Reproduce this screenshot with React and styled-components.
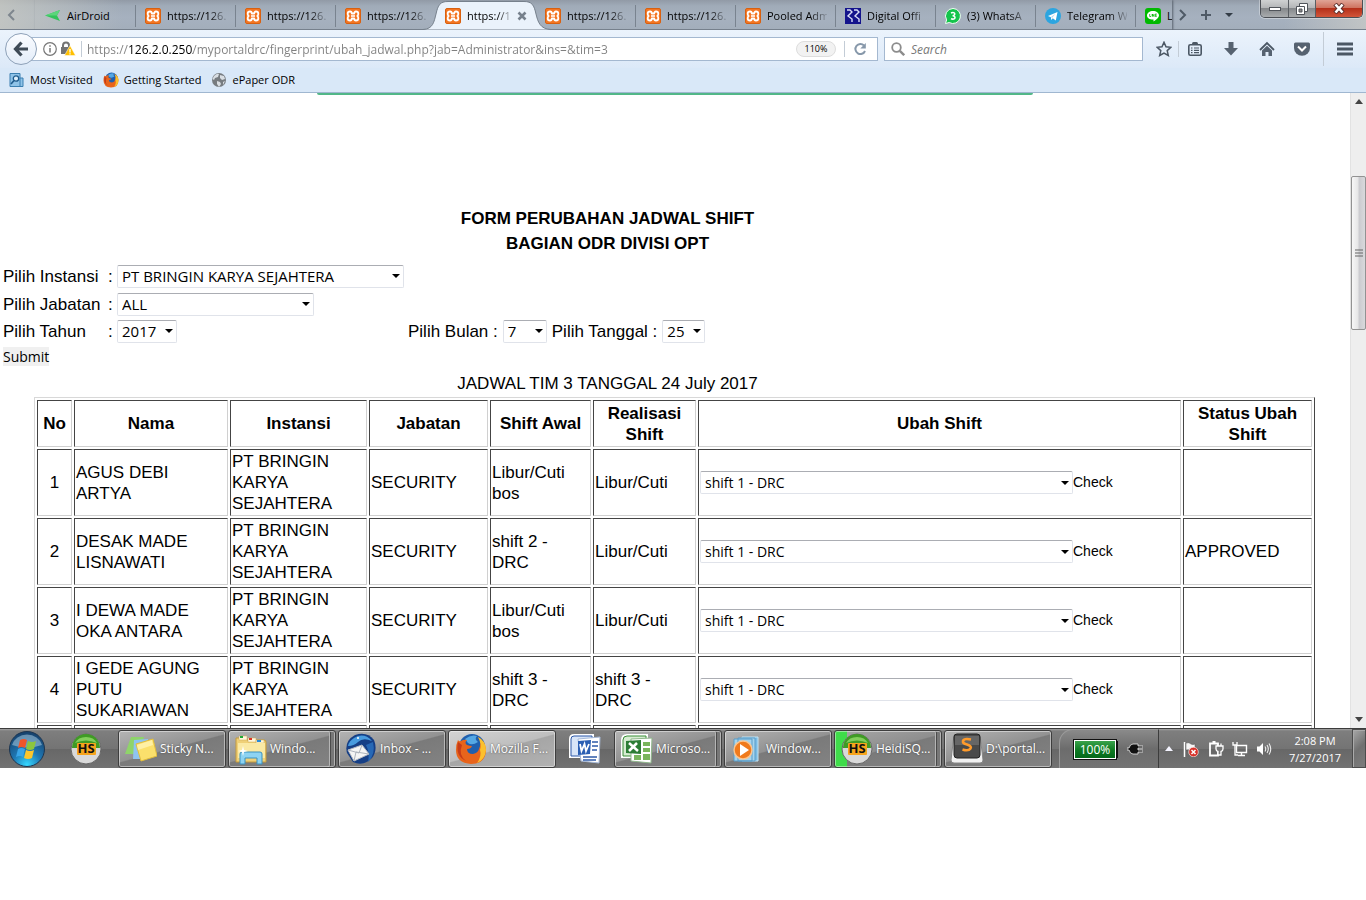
import React from "react";
import styled, { createGlobalStyle, css } from "styled-components";

const UI = `"Open Sans", "Noto Sans", sans-serif`;
const PAGE = `"Liberation Sans", Arial, sans-serif`;

const Global = createGlobalStyle`
  *, *::before, *::after { box-sizing: border-box; }
  body { margin: 0; background: #fff; font-family: ${UI}; font-size: 11px; color: #000; }
  button, input, select { font: inherit; color: inherit; margin: 0; }
  button { border: 0; padding: 0; background: none; cursor: pointer; }
  svg { display: block; flex: none; }
`;

const Desktop = styled.div`
  display: flex;
  flex-direction: column;
  overflow: hidden;
`;

/* ---------- tab strip ---------- */
const TabStrip = styled.header`
  display: flex;
  height: 30px;
  background:
    linear-gradient(90deg, rgba(205, 205, 196, 0.7), rgba(190, 195, 195, 0) 9%, rgba(190, 195, 195, 0) 94%, rgba(205, 205, 200, 0.7)),
    linear-gradient(#919aa6 0, #a0abb8 20%, #a6b1bf 60%, #a3aebb 100%);
  border-bottom: 1px solid #76808c;
`;
const StripButton = styled.button`
  width: ${(p) => p.$w}px;
  height: 30px;
  display: grid;
  place-items: center;
  flex: none;
`;
const Tabs = styled.nav`
  display: flex;
  flex: 0 1 1137px;
  min-width: 0;
  height: 30px;
  overflow: hidden;
  box-shadow: 1px 0 2px #59626d;
`;
const Tab = styled.button`
  position: relative;
  flex: none;
  width: 100px;
  height: 30px;
  padding: 2px 8px 0 10px;
  display: flex;
  align-items: center;
  gap: 6px;
  text-align: left;
  &::after {
    content: "";
    display: ${(p) => (p.$line ? "block" : "none")};
    position: absolute;
    right: -1px;
    top: 5px;
    width: 1px;
    height: 22px;
    background: #79838f;
  }
  z-index: ${(p) => (p.$active ? 2 : 1)};
`;
const TabShape = styled.svg`
  position: absolute;
  left: -12px;
  top: 0;
  z-index: -1;
`;
const TabText = styled.span`
  flex: 1;
  min-width: 0;
  overflow: hidden;
  white-space: nowrap;
  font-size: 11px;
  line-height: 16px;
  ${(p) =>
    p.$fade &&
    css`
      mask-image: linear-gradient(90deg, #000 70%, transparent 105%);
    `}
`;
const Spacer = styled.div`
  flex: 1;
`;
const WindowButtons = styled.div`
  display: flex;
  flex: none;
  height: 18px;
  margin-right: 3px;
  border: 1px solid #4b4f55;
  border-top: 0;
  border-radius: 0 0 5px 5px;
  overflow: hidden;
  box-shadow: 0 0 0 1px rgba(255, 255, 255, 0.35);
`;
const WindowButton = styled.button`
  width: ${(p) => p.$w}px;
  display: grid;
  place-items: center;
  border-right: 1px solid #5a5e63;
  background: ${(p) =>
    p.$close
      ? "linear-gradient(#e0a496 0, #cf7461 45%, #b5301a 50%, #d2563a 100%)"
      : "linear-gradient(#cfd1d2 0, #b4b6b8 45%, #85888b 50%, #a9acae 100%)"};
  &:last-child { border-right: 0; }
`;

/* ---------- navigation bar ---------- */
const NavBar = styled.div`
  display: flex;
  align-items: center;
  height: 38px;
  padding-left: 5px;
  background: linear-gradient(#ebf3fc, #dce9f8);
`;
const BackButton = styled.button`
  width: 32px;
  height: 32px;
  flex: none;
  display: grid;
  place-items: center;
  border: 1px solid #8ea1b8;
  border-radius: 50%;
  background: linear-gradient(#fafcff, #e3edf9);
  z-index: 1;
`;
const UrlBar = styled.div`
  display: flex;
  align-items: center;
  flex: 1 1 857px;
  min-width: 0;
  height: 24px;
  margin: 0 6px 0 -16px;
  padding: 0 10px 0 21px;
  border: 1px solid #a4b8d0;
  background: #fff;
`;
const UrlInput = styled.input`
  flex: 1;
  min-width: 0;
  height: 22px;
  padding: 0;
  border: 0;
  outline: 0;
  font-size: 12px;
  color: transparent;
  background: linear-gradient(90deg, #808080 0 41px, #000 41px 106px, #808080 106px) text;
`;
const Divider = styled.i`
  width: 1px;
  height: ${(p) => p.$h}px;
  margin: 0 ${(p) => p.$m}px;
  background: #c3ccd6;
  flex: none;
`;
const ZoomPill = styled.button`
  width: 40px;
  height: 16px;
  border: 1px solid #ddd;
  border-radius: 8px;
  background: #f2f2f2;
  font-size: 9px;
  line-height: 14px;
`;
const SearchBar = styled.label`
  display: flex;
  align-items: center;
  gap: 6px;
  flex: 0 1 259px;
  height: 24px;
  padding: 0 6px;
  border: 1px solid #a4b8d0;
  background: #fff;
`;
const SearchInput = styled.input`
  width: 100%;
  min-width: 0;
  border: 0;
  padding: 0;
  outline: 0;
  font-size: 12px;
  &::placeholder { color: #777; font-style: italic; opacity: 1; }
`;
const Tools = styled.div`
  display: flex;
  align-items: center;
  margin-left: 9px;
`;
const Tool = styled.button`
  width: ${(p) => p.$w || 36}px;
  height: 30px;
  display: grid;
  place-items: center;
`;

/* ---------- bookmarks ---------- */
const Bookmarks = styled.nav`
  display: flex;
  align-items: center;
  gap: 10px;
  height: 25px;
  padding: 0 9px;
  background: #d9e8f8;
  border-bottom: 1px solid #a0b7d0;
`;
const Bookmark = styled.a`
  display: flex;
  align-items: center;
  gap: 5px;
  color: #000;
  text-decoration: none;
  font-size: 11px;
  line-height: 16px;
  white-space: nowrap;
`;

/* ---------- page ---------- */
const Viewport = styled.div`
  display: flex;
  height: 635px;
`;
const Page = styled.main`
  flex: 1;
  min-width: 0;
  overflow: hidden;
  font-family: ${PAGE};
  font-size: 17px;
  line-height: 21px;
`;
const Banner = styled.div`
  width: 53%;
  height: 2px;
  margin: 0 auto;
  background: #52b788;
  border-radius: 0 0 4px 4px;
`;
const Form = styled.form`
  width: 90%;
  padding: 111px 3px 0;
`;
const Heading = styled.h1`
  margin: 0;
  font-size: 17px;
  line-height: 25px;
  text-align: center;
`;
const Fields = styled.div`
  display: grid;
  grid-template-columns: 102px 6px 288px auto;
  column-gap: 3px;
  grid-template-rows: 28px 28px 26px;
  align-items: center;
  margin-top: 6px;
`;
const Label = styled.label`
  white-space: nowrap;
`;
const DateFields = styled.div`
  display: flex;
  align-items: center;
  gap: 5px;
`;
const SelectWrap = styled.span`
  display: inline-grid;
  align-items: center;
  width: ${(p) => p.$w}px;
  svg { grid-area: 1 / 1; justify-self: end; margin-right: 4px; pointer-events: none; }
`;
const SelectBox = styled.select`
  grid-area: 1 / 1;
  width: 100%;
  height: 23px;
  padding: 0 4px;
  appearance: none;
  border: 1px solid #e0e3ea;
  border-top-color: #abadb3;
  border-radius: 2px;
  background: #fff;
  font-family: ${UI};
  font-size: ${(p) => p.$size || 15}px;
`;
const Submit = styled.button`
  display: block;
  height: 19px;
  margin-top: 3px;
  background: #f0f0f0;
  font-family: ${UI};
  font-size: 14px;
  line-height: 19px;
`;
const Subtitle = styled.p`
  margin: 7px 0 2px;
  line-height: 22px;
  text-align: center;
`;
const TableArea = styled.div`
  padding: 0 35px 0 34px;
`;
const Schedule = styled.table`
  width: 100%;
  table-layout: fixed;
  border: 1px solid #d8d8d8;
  border-right-color: #444;
  border-bottom-color: #444;
  border-spacing: 2px;
`;
const cell = css`
  padding: 1px;
  border: 1px solid #d0d0d0;
  border-top-color: #444;
  border-left-color: #444;
  white-space: pre-line;
`;
const Th = styled.th`
  ${cell}
  height: 47px;
`;
const Td = styled.td`
  ${cell}
  height: 67px;
  text-align: ${(p) => (p.$center ? "center" : "left")};
`;
const ShiftField = styled.div`
  display: flex;
  align-items: center;
`;
const CheckButton = styled.button`
  font-size: 14px;
`;
const Scrollbar = styled.div`
  display: flex;
  flex-direction: column;
  align-items: center;
  width: 16px;
  flex: none;
  padding: 6px 0;
  background: #eeeeee;
  border-left: 1px solid #e2e2e2;
`;
const Thumb = styled.div`
  display: grid;
  place-items: center;
  width: 15px;
  height: 154px;
  margin: 72px 0 auto;
  border: 1px solid #929292;
  border-radius: 2px;
  background: linear-gradient(90deg, #f7f7f7, #e6e6e7 45%, #cbcbcf 55%, #d9d9dc);
`;

/* ---------- taskbar ---------- */
const Taskbar = styled.footer`
  display: flex;
  align-items: center;
  gap: 2px;
  height: 40px;
  border-top: 1px solid #3c3c3c;
  background: linear-gradient(#a2a2a2 0, #7e7e7e 2px, #747474 50%, #676767 51%, #727272 100%);
  color: #fff;
  font-size: 11px;
`;
const Launcher = styled.button`
  display: grid;
  place-items: center;
  flex: none;
  width: ${(p) => p.$w}px;
  height: 38px;
`;
const Task = styled.button`
  display: flex;
  align-items: center;
  gap: 3px;
  flex: 0 1 108px;
  min-width: 0;
  height: 38px;
  padding: 0 4px 0 6px;
  border: 1px solid #3e3e3e;
  border-radius: 3px;
  box-shadow: inset 0 0 0 1px rgba(255, 255, 255, 0.45)${(p) => (p.$stack ? ", inset -4px 0 0 0 #777, inset -5px 0 0 0 #4a4a4a, inset -6px 0 0 0 #b5b5b5" : "")};
  color: #fff;
  font-size: 12px;
  text-align: left;
  background: ${(p) =>
    p.$active
      ? "linear-gradient(165deg, #d4d4d4 0, #bebebe 48%, #a6a6a6 50%, #b2b2b2 100%)"
      : p.$progress
      ? "linear-gradient(90deg, #3fdc4a 0 12px, transparent 12px), linear-gradient(165deg, #a8a8a8 0, #8e8e8e 48%, #7a7a7a 50%, #828282 100%)"
      : "linear-gradient(165deg, #b4b4b4 0, #929292 48%, #7a7a7a 50%, #838383 100%)"};
  span { white-space: nowrap; text-shadow: 0 0 2px #444; }
`;
const TrayPanel = styled.div`
  display: flex;
  align-items: center;
  gap: 11px;
  flex: none;
  width: 100px;
  height: 39px;
  margin-left: 5px;
  padding-left: 14px;
  border: 1px solid #9a9a9a;
  border-right-color: #3c3c3c;
  border-bottom: 0;
  border-radius: 14px 0 0 0;
  background: linear-gradient(#8a8a8a, #6c6c6c 50%, #747474);
`;
const Battery = styled.div`
  width: 42px;
  height: 19px;
  border: 1px solid #fff;
  outline: 1px solid #111;
  background: linear-gradient(#3aa34b, #0d7a22 55%, #05691a);
  font-size: 12px;
  line-height: 17px;
  text-align: center;
  box-shadow: 3px 0 0 -1px #111;
`;
const TrayIcons = styled.div`
  display: flex;
  align-items: center;
  gap: 8px;
  margin-left: 3px;
  flex: none;
`;
const Clock = styled.div`
  flex: 1 0 68px;
  margin-left: 6px;
  line-height: 17px;
  text-align: center;
`;
const ShowDesktop = styled.button`
  width: 14px;
  height: 39px;
  flex: none;
  border: 1px solid #4c4c4c;
  box-shadow: inset 1px 1px 0 #aaa;
  background: linear-gradient(135deg, #a8a8a8, #707070 50%, #7d7d7d);
`;

/* ---------- icons ---------- */
const Svg = ({ w = 16, h = w, vb, children, ...rest }) => (
  <svg width={w} height={h} viewBox={vb || `0 0 ${w} ${h}`} fill="none" aria-hidden="true" {...rest}>
    {children}
  </svg>
);
const Xampp = () => (
  <Svg>
    <rect x=".5" y=".5" width="15" height="15" rx="1.5" fill="#f37623" stroke="#d9600f" />
    <path
      d="M5 3.500q1.800 0 1.800 2h2.400q0-2 1.800-2 2.300 0 2.300 2.300 0 1.500-1 2.200 1 .7 1 2.200 0 2.300-2.300 2.300-1.800 0-1.800-2H6.800q0 2-1.800 2-2.300 0-2.300-2.300 0-1.500 1-2.200-1-.7-1-2.200Q2.700 3.500 5 3.500Z"
      fill="#f37623"
      stroke="#fff"
      strokeWidth="1.800"
      strokeLinejoin="round"
    />
    <path d="M6 8h4" stroke="#fff" strokeWidth="1.600" />
  </Svg>
);
const AirDroid = () => (
  <Svg>
    <path d="M0 7.5 15 2l-3 5.5L15 13Z" fill="#32c35a" />
    <path d="M0 7.5 15 2l-3 5.5Z" fill="#5bd57b" />
  </Svg>
);
const Digital = () => (
  <Svg>
    <rect width="16" height="16" fill="#14148c" />
    <path d="M2 2h3l2 2-4 4 4 3v3M9 2h3l2 2-4 4 4 3v3" stroke="#d8dcf5" strokeWidth="1.4" />
  </Svg>
);
const WhatsApp = () => (
  <Svg>
    <path d="M8 .5a7.5 7.5 0 1 1-3.8 14L.5 15.5l1.1-3.6A7.5 7.5 0 0 1 8 .5Z" fill="#14c44c" stroke="#f4fff6" />
    <path d="M6 5q2-1 3.4 0c.9 1.1.2 2.500-1.800 2.700 2.400.1 3 1.800 1.900 2.900Q8 11.600 6 10.700" stroke="#fff" strokeWidth="1.5" />
  </Svg>
);
const Telegram = () => (
  <Svg>
    <circle cx="8" cy="8" r="8" fill="#2ca5e0" />
    <path d="m3 8 9.500-4-1.700 8.500-3-2.200-1.600 1.600-.3-2.700Z" fill="#fff" />
    <path d="m6 9 4.500-3.300-3.400 4.200" fill="#b5d9ee" />
  </Svg>
);
const Line = () => (
  <Svg>
    <rect width="16" height="16" rx="3" fill="#00b900" />
    <path d="M8 3c3.300 0 6 1.900 6 4.500 0 2.200-2.400 4-5.500 6v-1.900C4.700 11.700 2 10 2 7.500 2 4.900 4.700 3 8 3Z" fill="#fff" />
    <path d="M4.700 6v2.500H6M7.300 6v2.500V6l1.600 2.500V6M11.700 6h-1.400v2.500h1.400M10.300 7.200h1.400" stroke="#00b900" strokeWidth=".8" />
  </Svg>
);
const Firefox = ({ s = 16 }) => (
  <Svg w={s} vb="0 0 32 32">
    <circle cx="17" cy="14" r="13" fill="#1f5fae" />
    <path d="M10 6q6-5 12-3-3 3 1 6-6 4-10 1Z" fill="#55a8e4" />
    <path d="M3 7q1 2 3 1 3-2 6-1-3 3 0 5 3 1 5 1-1 3-5 3 0 5 6 5 5-1 6-5 3-7-1-12 7 4 8 12 0 15-15 15Q1 30 1 17 1 11 3 7Z" fill="#e8641b" />
    <path d="M23 4q8 4 8 13-1 10-9 13 5-7 3-13 2-6-2-13Z" fill="#fbc02d" />
    <path d="M3 9q-3 14 8 19Q3 22 7 12Z" fill="#c63c18" />
  </Svg>
);
const Globe = () => (
  <Svg>
    <circle cx="8" cy="8" r="7" fill="#777c80" />
    <path d="M3 4q3-3 5-2L7 5 4 6 3 8 1.500 7ZM9 3l4 1 1 3-3 1-2-2ZM6 9l3 1 1 2-2 3-2-3ZM12 10l2-1-2 4Z" fill="#d9dee3" />
  </Svg>
);
const MostVisited = () => (
  <Svg>
    <path d="M1 1.500h10v13H1zM11 6h3v8.500h-3" fill="#8fc3e8" stroke="#3b7fb1" />
    <circle cx="7" cy="6.500" r="2.700" fill="#dceffc" stroke="#1e5a8c" strokeWidth="1.300" />
    <path d="m5 8.500-3 3.500" stroke="#1e5a8c" strokeWidth="1.600" />
  </Svg>
);
const Heidi = () => (
  <Svg w={32}>
    <circle cx="16" cy="16" r="15" fill="#d9d9d9" stroke="#666" />
    <path d="M2 15a14 14 0 0 1 28 0Z" fill="#3f9b25" />
    <path d="M5 10a12 10 0 0 1 22 0q-11-5-22 0Z" fill="#83cf5c" />
    <rect x="7" y="10" width="19" height="12" rx="1" fill="#f6a41c" />
    <text x="16" y="20" textAnchor="middle" fontFamily="Open Sans" fontWeight="700" fontSize="13" fill="#111">HS</text>
  </Svg>
);
const Orb = () => (
  <Svg w={38}>
    <defs>
      <radialGradient id="orb" cx=".5" cy=".95" r=".9">
        <stop offset="0" stopColor="#35d8ff" />
        <stop offset=".45" stopColor="#1f78b4" />
        <stop offset="1" stopColor="#17436f" />
      </radialGradient>
    </defs>
    <circle cx="19" cy="19" r="17.500" fill="url(#orb)" stroke="#1d3550" />
    <path d="M4 15a15.500 14 0 0 1 30 0Q19 20 4 15Z" fill="#b8d6e8" opacity=".5" />
    <path d="M12 10q4-2 7 0l-2 8q-3-2-7 0Z" fill="#f0562a" />
    <path d="M20 11q4 2 8 0l-2 8q-4 2-8 0Z" fill="#8cc63e" />
    <path d="M10 19q3-2 7 0l-2 8q-3-2-7 0Z" fill="#39a5e8" />
    <path d="M18 20q4 2 8 0l-2 8q-4 2-8 0Z" fill="#fdc62c" />
  </Svg>
);
const Sticky = () => (
  <Svg w={32}>
    <path d="M6 4h13l-5 17H0Z" fill="#8fd46a" />
    <path d="m9 7 14-1-1 20H8Z" fill="#8fc4f0" />
    <path d="m11 11 17-5 4 17-16 5Z" fill="#fbe06c" stroke="#e2bd3c" />
    <path d="m12 12 15-5 1 5-15 5Z" fill="#fff0a4" />
  </Svg>
);
const Explorer = () => (
  <Svg w={32}>
    <path d="M1 5h9l2 2h17q2 0 2 2v20H1Z" fill="#efd077" stroke="#c49a3c" />
    <path d="M4 3h8v4H4ZM13 5h8v4h-8ZM21 7h8v3h-8Z" fill="#fff7dc" stroke="#cda954" strokeWidth=".5" />
    <path d="M5 3h3v2H5Z" fill="#1faa35" />
    <path d="M14 5h3v2h-3Z" fill="#dd3423" />
    <path d="M22 7h4v2h-4Z" fill="#268ad8" />
    <path d="M3 10h27v15H3Z" fill="#fae9a4" />
    <path d="M5 31V21q0-2 2-2h18q2 0 2 2v10h-5v-6H10v6Z" fill="#8dd3f2" stroke="#3a91bf" />
    <path d="m8 13 1 4 4 1-4 1-1 4-1-4-4-1 4-1Z" fill="#fff" />
  </Svg>
);
const Thunderbird = () => (
  <Svg w={32}>
    <path d="M2 20Q-1 8 10 2 22-2 29 7q4 10-2 18-9 9-19 4Z" fill="#163f86" />
    <path d="M9 5q10-6 18 3-9-4-14 1-4 4-10 4 1-5 6-8Z" fill="#489bdf" />
    <path d="M28 9q3 12-5 20 2-9-2-17Z" fill="#2768b5" />
    <path d="m3 17 14-5 7 9-15 7Z" fill="#f5f5f5" stroke="#b7bbc2" />
    <path d="m3 17 11 3 3-8M9 28l2-9 13 2" stroke="#aeb4bd" />
    <circle cx="13" cy="5" r="1" fill="#fff" />
  </Svg>
);
const Word = () => (
  <Svg w={32}>
    <path d="M5 2h19v22H1V6Q1 2 5 2Z" fill="#d8e5f8" stroke="#fff" strokeWidth="2" />
    <path d="M5 3h18v20H2V6q0-3 3-3Z" stroke="#2d59a8" />
    <path d="m9 6 22-2-1 26-18-2Z" fill="#fff" stroke="#a6b9d8" />
    <path d="m9 8 13-1-1 14-12 1Z" fill="#2b5fb3" />
    <path d="m11 11 1.500 7 3-7 1.500 7 3-7" stroke="#fff" strokeWidth="1.800" />
    <path d="M23 9h6M23 13h6M23 17h5M14 24h14M14 27h13" stroke="#2d59a8" strokeWidth="1.500" />
  </Svg>
);
const Excel = () => (
  <Svg w={32}>
    <path d="M6 2h20v22H1V7q0-5 5-5Z" fill="#d7ecd2" stroke="#fff" strokeWidth="2" />
    <path d="M6 3h19v20H2V7q0-4 4-4Z" stroke="#3a8f39" />
    <path d="m10 6 21-1-1 25-20-2Z" fill="#fff" stroke="#8fb78b" />
    <path d="M22 9h7v4h-7ZM22 15h7v4h-7ZM13 22h7v5h-7ZM22 21h7v6h-7Z" fill="#79b55d" />
    <path d="m5 8 15-1v14L5 20Z" fill="#2c7d35" />
    <path d="m8 10 9 8M16 10l-8 8" stroke="#fff" strokeWidth="2.500" />
  </Svg>
);
const MediaPlayer = () => (
  <Svg w={32}>
    <path d="M11 4h16v24H11Z" fill="#7bbce4" stroke="#c5e5f5" />
    <path d="M7 5h17v23H7ZM3 6h18v22H3Z" fill="#a5d4ee" stroke="#5a9cc7" />
    <circle cx="12" cy="17" r="9" fill="#f07a1c" stroke="#fbc48e" strokeWidth="1.500" />
    <path d="m9 11 9 6-9 6Z" fill="#fff" />
  </Svg>
);
const Sublime = () => (
  <Svg w={32}>
    <path d="M3 2h26l3 25q0 3-3 3H3q-3 0-3-3Z" fill="#f1f1f1" stroke="#888" />
    <rect x="3" y="1" width="26" height="24" rx="3" fill="#4a4a4a" stroke="#222" />
    <path d="M4 3h24v9H4Z" fill="#666" />
    <path d="M20 6.500q-7-1.500-8 1.500-.5 2.500 4 3.500 5 1.500 3.500 4-2 3-8 1" stroke="#ff9b2b" strokeWidth="2.600" />
  </Svg>
);

const Caret = () => (
  <Svg w={8} h={4}>
    <path d="M0 0h8L4 4Z" fill="#000" />
  </Svg>
);

/* ---------- data ---------- */
const tabs = [
  { icon: <AirDroid />, text: "AirDroid", line: true },
  { icon: <Xampp />, text: "https://126.", line: true, fade: true },
  { icon: <Xampp />, text: "https://126.", line: true, fade: true },
  { icon: <Xampp />, text: "https://126.", fade: true },
  { icon: <Xampp />, text: "https://1", active: true, fade: true },
  { icon: <Xampp />, text: "https://126.", line: true, fade: true },
  { icon: <Xampp />, text: "https://126.", line: true, fade: true },
  { icon: <Xampp />, text: "Pooled Adm", line: true, fade: true },
  { icon: <Digital />, text: "Digital Offi", line: true, fade: true },
  { icon: <WhatsApp />, text: "(3) WhatsA", line: true, fade: true },
  { icon: <Telegram />, text: "Telegram W", line: true, fade: true },
  { icon: <Line />, text: "L" },
];
const rows = [
  ["AGUS DEBI\nARTYA", "Libur/Cuti\nbos", "Libur/Cuti", ""],
  ["DESAK MADE\nLISNAWATI", "shift 2 -\nDRC", "Libur/Cuti", "APPROVED"],
  ["I DEWA MADE\nOKA ANTARA", "Libur/Cuti\nbos", "Libur/Cuti", ""],
  ["I GEDE AGUNG\nPUTU\nSUKARIAWAN", "shift 3 -\nDRC", "shift 3 -\nDRC", ""],
  ["", "", "", ""],
];
const columns = [
  ["No", 35],
  ["Nama", 154],
  ["Instansi", 137],
  ["Jabatan", 119],
  ["Shift Awal", 101],
  ["Realisasi Shift", 103],
  ["Ubah Shift", null],
  ["Status Ubah Shift", 129],
];

function Select({ id, label, width, size, options }) {
  return (
    <SelectWrap $w={width}>
      <SelectBox id={id} aria-label={label} $size={size}>
        {options.map((o) => (
          <option key={o}>{o}</option>
        ))}
      </SelectBox>
      <Caret />
    </SelectWrap>
  );
}

function Browser() {
  return (
    <>
      <TabStrip>
        <StripButton $w={35} aria-label="Scroll tabs left">
          <Svg w={8} h={12} style={{ marginRight: 14 }}>
            <path d="M7 1 2 6l5 5" stroke="#7e868e" strokeWidth="2" />
          </Svg>
        </StripButton>
        <Tabs>
          {tabs.map((t, i) => (
            <Tab key={i} $line={t.line} $active={t.active}>
              {t.active && (
                <TabShape width="128" height="30" viewBox="0 0 128 30" fill="none" aria-hidden="true">
                  <path d="M0 29.500C10 29 11 22 13 14 15 5 17 1.500 25 1.500h76c8 0 10 3.500 12 12.500 2 8 4 15 15 15.500" fill="#eaf2fb" stroke="#76808c" />
                </TabShape>
              )}
              {t.icon}
              <TabText $fade={t.fade}>{t.text}</TabText>
              {t.active && (
                <Svg w={10}>
                  <path d="m1.500 1.500 7 7m0-7-7 7" stroke="#76818d" strokeWidth="2.600" />
                </Svg>
              )}
            </Tab>
          ))}
        </Tabs>
        <StripButton $w={22} aria-label="Scroll tabs right">
          <Svg w={8} h={12}>
            <path d="m1 1 5 5-5 5" stroke="#4f5a66" strokeWidth="2" />
          </Svg>
        </StripButton>
        <StripButton $w={24} aria-label="New tab">
          <Svg w={10}>
            <path d="M5 0v10M0 5h10" stroke="#4f5a66" strokeWidth="2" />
          </Svg>
        </StripButton>
        <StripButton $w={22} aria-label="List all tabs">
          <Svg w={8} h={4}>
            <path d="M0 0h8L4 4Z" fill="#333c46" />
          </Svg>
        </StripButton>
        <Spacer />
        <WindowButtons>
          <WindowButton $w={28} aria-label="Minimize">
            <Svg w={12} h={6}><rect x=".5" y="1.500" width="11" height="3" fill="#fff" stroke="#50545a" /></Svg>
          </WindowButton>
          <WindowButton $w={27} aria-label="Restore">
            <Svg w={12} h={12}>
              <path d="M3.500.500h8v8h-8Z" fill="#fff" stroke="#50545a" />
              <path d="M.500 3.500h8v8h-8Z" fill="#fff" stroke="#50545a" />
              <path d="M3 6h3v3H3Z" fill="#888" stroke="#50545a" />
            </Svg>
          </WindowButton>
          <WindowButton $w={46} $close aria-label="Close">
            <Svg w={12} h={11}>
              <path d="m2 1 8 9m0-9-8 9" stroke="#5c2f2c" strokeWidth="4.400" />
              <path d="m2.500 1.500 7 8m0-8-7 8" stroke="#fff" strokeWidth="2.600" />
            </Svg>
          </WindowButton>
        </WindowButtons>
      </TabStrip>

      <NavBar>
        <BackButton aria-label="Back">
          <Svg w={16}>
            <path d="M8.500 1.500 2.500 8l6 6.500M3 8h12" stroke="#3f4b57" strokeWidth="3.200" />
          </Svg>
        </BackButton>
        <UrlBar>
          <Svg w={14}>
            <circle cx="7" cy="7" r="6.300" stroke="#777" strokeWidth="1.200" />
            <path d="M7 6v4.500M7 3.200v1.600" stroke="#777" strokeWidth="1.500" />
          </Svg>
          <Svg w={16} style={{ marginLeft: 3 }}>
            <path d="M3 7V4.500a3 3 0 0 1 6 0V7" stroke="#737373" strokeWidth="2" />
            <path d="M1 6h10v7H1Z" fill="#737373" />
            <path d="M10 4.500 15.500 14.500H4.500Z" fill="#ffbf00" stroke="#fff" strokeWidth=".500" />
            <path d="M10 8v3.500M10 12.200v1.300" stroke="#fff" strokeWidth="1.300" />
          </Svg>
          <Divider $h={16} $m={5} />
          <UrlInput
            aria-label="Address"
            defaultValue="https://126.2.0.250/myportaldrc/fingerprint/ubah_jadwal.php?jab=Administrator&ins=&tim=3"
          />
          <ZoomPill>110%</ZoomPill>
          <Divider $h={16} $m={8} />
          <Svg w={14}>
            <path d="M11 3.500A5 5 0 1 0 12 9" stroke="#8798aa" strokeWidth="2" />
            <path d="M12.800 1v5.500H7.300Z" fill="#8798aa" />
          </Svg>
        </UrlBar>
        <SearchBar>
          <Svg w={14}>
            <circle cx="5.500" cy="5.500" r="4.300" stroke="#8c8c8c" strokeWidth="1.800" />
            <path d="m8.800 8.800 4.400 4.400" stroke="#8c8c8c" strokeWidth="2.400" />
          </Svg>
          <SearchInput placeholder="Search" aria-label="Search" />
        </SearchBar>
        <Tools>
          <Tool $w={24} aria-label="Bookmark this page">
            <Svg>
              <path d="m8 1.300 2 4.500 4.900.5-3.700 3.300 1.100 4.900L8 12l-4.300 2.500 1.100-4.900L1.100 6.300 6 5.800Z" stroke="#4b5764" strokeWidth="1.500" />
            </Svg>
          </Tool>
          <Divider $h={16} $m={2} />
          <Tool $w={28} aria-label="Bookmarks list">
            <Svg>
              <rect x="1.800" y="3.800" width="12.400" height="10.400" rx="1.500" stroke="#4b5764" strokeWidth="1.600" />
              <path d="M5 4V2.500Q5 1 6.500 1h3Q11 1 11 2.500V4Z" fill="#4b5764" />
              <path d="M4 7h1.500M7 7h5M4 9.300h1.500M7 9.300h5M4 11.600h1.500M7 11.600h5" stroke="#4b5764" strokeWidth="1.200" />
            </Svg>
          </Tool>
          <Tool $w={44} aria-label="Downloads">
            <Svg>
              <path d="M5.500 1h5v6H15l-7 7.500L1 7h4.500Z" fill="#566270" />
            </Svg>
          </Tool>
          <Tool $w={28} aria-label="Home">
            <Svg>
              <path d="M1 9l7-7 7 7" stroke="#4b5764" strokeWidth="1.800" />
              <path d="M3 9.500 8 4.800l5 4.700V15H9.500v-4h-3v4H3Z" fill="#566270" />
            </Svg>
          </Tool>
          <Tool $w={42} aria-label="Pocket">
            <Svg>
              <path d="M1.500 1.500h13q1.500 0 1.500 1.500v4a8 7.800 0 0 1-16 0V3q0-1.500 1.500-1.500Z" fill="#566270" />
              <path d="M4 5.500 8 9.500l4-4" stroke="#fff" strokeWidth="2" />
            </Svg>
          </Tool>
          <Divider $h={34} $m={0} />
          <Tool $w={42} aria-label="Menu">
            <Svg>
              <path d="M0 3h16M0 8h16M0 13h16" stroke="#4b5764" strokeWidth="3" />
            </Svg>
          </Tool>
        </Tools>
      </NavBar>

      <Bookmarks>
        <Bookmark href="#most"><MostVisited />Most Visited</Bookmark>
        <Bookmark href="#start"><Firefox />Getting Started</Bookmark>
        <Bookmark href="#epaper"><Globe />ePaper ODR</Bookmark>
      </Bookmarks>
    </>
  );
}

function Jadwal() {
  return (
    <Page>
      <Banner />
      <Form onSubmit={(e) => e.preventDefault()}>
        <Heading>
          FORM PERUBAHAN JADWAL SHIFT
          <br />
          BAGIAN ODR DIVISI OPT
        </Heading>
        <Fields>
          <Label htmlFor="instansi">Pilih Instansi</Label>
          <span>:</span>
          <Select id="instansi" width={287} options={["PT BRINGIN KARYA SEJAHTERA"]} />
          <span />
          <Label htmlFor="jabatan">Pilih Jabatan</Label>
          <span>:</span>
          <Select id="jabatan" width={197} options={["ALL"]} />
          <span />
          <Label htmlFor="tahun">Pilih Tahun</Label>
          <span>:</span>
          <Select id="tahun" width={60} options={["2017"]} />
          <DateFields>
            <Label htmlFor="bulan">Pilih Bulan :</Label>
            <Select id="bulan" width={44} options={["7"]} />
            <Label htmlFor="tanggal">Pilih Tanggal :</Label>
            <Select id="tanggal" width={43} options={["25"]} />
          </DateFields>
        </Fields>
        <Submit type="submit">Submit</Submit>
        <Subtitle>JADWAL TIM 3 TANGGAL 24 July 2017</Subtitle>
      </Form>
      <TableArea>
        <Schedule>
          <colgroup>
            {columns.map(([name, w]) => (
              <col key={name} width={w || undefined} />
            ))}
          </colgroup>
          <thead>
            <tr>
              {columns.map(([name]) => (
                <Th key={name} scope="col">{name}</Th>
              ))}
            </tr>
          </thead>
          <tbody>
            {rows.map(([name, awal, real, status], i) => (
              <tr key={i}>
                <Td $center>{name && i + 1}</Td>
                <Td>{name}</Td>
                <Td>{name && "PT BRINGIN\nKARYA\nSEJAHTERA"}</Td>
                <Td>{name && "SECURITY"}</Td>
                <Td>{awal}</Td>
                <Td>{real}</Td>
                <Td>
                  {name && (
                    <ShiftField>
                      <Select label={`Ubah shift ${name}`} width={373} size={14} options={["shift 1 - DRC"]} />
                      <CheckButton type="button">Check</CheckButton>
                    </ShiftField>
                  )}
                </Td>
                <Td>{status}</Td>
              </tr>
            ))}
          </tbody>
        </Schedule>
      </TableArea>
    </Page>
  );
}

function SystemBar() {
  return (
    <Taskbar>
      <Launcher $w={54} aria-label="Start"><Orb /></Launcher>
      <Launcher $w={60} aria-label="HeidiSQL"><Heidi /></Launcher>
      <Task><Sticky /><span>Sticky N...</span></Task>
      <Task $stack><Explorer /><span>Windo...</span></Task>
      <Task><Thunderbird /><span>Inbox - ...</span></Task>
      <Task $active><Firefox s={32} /><span>Mozilla F...</span></Task>
      <Launcher $w={54} aria-label="Word"><Word /></Launcher>
      <Task $stack><Excel /><span>Microso...</span></Task>
      <Task><MediaPlayer /><span>Window...</span></Task>
      <Task $stack $progress><Heidi /><span>HeidiSQ...</span></Task>
      <Task><Sublime /><span>D:\portal...</span></Task>
      <TrayPanel>
        <Battery>100%</Battery>
        <Svg w={16} h={12}>
          <path d="M6 1h5v2h5v2h-5v2h5v2h-5v2H6Q3 11 2 7H0V5h2Q3 1 6 1Z" fill="#111" stroke="#eee" strokeWidth=".8" />
        </Svg>
      </TrayPanel>
      <TrayIcons>
        <Svg w={10} h={5}><path d="M1 5 5 0l4 5Z" fill="#f4f4ff" /></Svg>
        <Svg w={18} h={16}>
          <path d="M2.500 1v15" stroke="#fff" strokeWidth="1.500" />
          <path d="M4 2q3-1 5 1 2 1 4 0v7q-2 1-4 0-2-2-5-1Z" fill="#f5f5f5" stroke="#555" strokeWidth=".500" />
          <circle cx="11.500" cy="11" r="4.800" fill="#d8322a" stroke="#fff" strokeWidth=".600" />
          <path d="m9.500 9 4 4m0-4-4 4" stroke="#fff" strokeWidth="1.500" />
        </Svg>
        <Svg w={16}>
          <path d="M2 2.500h8v12H2ZM4.500 1h3" stroke="#fff" strokeWidth="1.800" />
          <path d="M8 5h7v3q0 2-2 2.500V14h-3v-3.500Q8 10 8 8ZM9.500 5V2.500M13 5V2.500" fill="#777" stroke="#fff" strokeWidth="1.300" />
        </Svg>
        <Svg w={16}>
          <path d="M4.500 4.500h10v7h-10ZM6 14.500h7M9.500 12v2" stroke="#fff" strokeWidth="1.400" />
          <path d="M1 1v3h4V1M3 4v10h3" stroke="#fff" strokeWidth="1.300" />
        </Svg>
        <Svg w={16}>
          <path d="M1 5.500h2.500L7 2v12l-3.500-3.500H1Z" fill="#fff" />
          <path d="M9 5.500q1.500 2.500 0 5M11 4q2.600 4 0 8M13 2.500q3.500 5.500 0 11" stroke="#eee" strokeWidth="1.100" />
        </Svg>
      </TrayIcons>
      <Clock>2:08 PM<br />7/27/2017</Clock>
      <ShowDesktop aria-label="Show desktop" />
    </Taskbar>
  );
}

export default function App() {
  return (
    <>
      <Global />
      <Desktop>
        <Browser />
        <Viewport>
          <Jadwal />
          <Scrollbar>
            <Svg w={8} h={5}><path d="M0 5 4 0l4 5Z" fill="#444" /></Svg>
            <Thumb>
              <Svg w={8} h={8}><path d="M0 1h8M0 4h8M0 7h8" stroke="#666" strokeWidth="1.200" /></Svg>
            </Thumb>
            <Svg w={8} h={5}><path d="M0 0h8L4 5Z" fill="#444" /></Svg>
          </Scrollbar>
        </Viewport>
        <SystemBar />
      </Desktop>
    </>
  );
}
